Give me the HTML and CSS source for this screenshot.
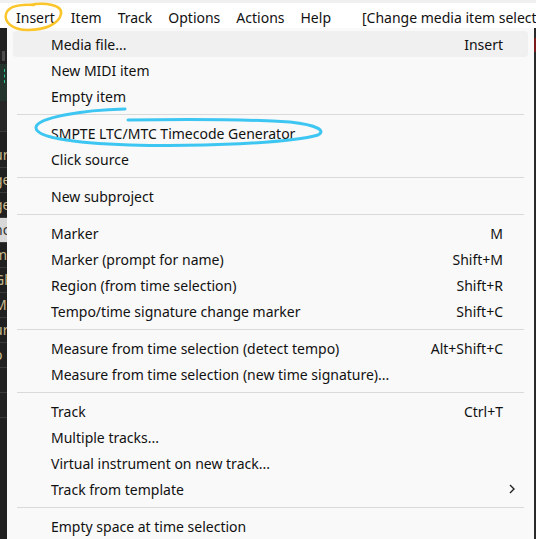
FILE: index.html
```html
<!DOCTYPE html>
<html>
<head>
<meta charset="utf-8">
<link rel="stylesheet" href="styles.css">
</head>
<body>
<div class="screen">
  <div class="topstrip"></div>
  <div class="menubar">
    <span class="mb">Insert</span>
    <span class="mb">Item</span>
    <span class="mb">Track</span>
    <span class="mb">Options</span>
    <span class="mb">Actions</span>
    <span class="mb">Help</span>
    <span class="mb title">[Change media item selection]</span>
  </div>
  <div class="below">
    <div class="leftstrip">
      <div class="ls ls-grey"></div>
      <div class="ls ls-green"><span class="dash"></span></div>
      <div class="ls ls-dark"></div>
      <div class="ls ls-line"></div>
      <div class="ls ls-txt">ur</div>
      <div class="ls ls-txt">ge</div>
      <div class="ls ls-txt">ge</div>
      <div class="ls ls-txt ls-sel">nc</div>
      <div class="ls ls-txt">m</div>
      <div class="ls ls-txt">Gl</div>
      <div class="ls ls-txt">M</div>
      <div class="ls ls-txt">ur</div>
      <div class="ls ls-txt">o</div>
      <div class="ls ls-txt"></div>
      <div class="ls ls-txt"></div>
    </div>
    <div class="menu">
      <div class="row hover"><span class="label">Media file...</span><span class="key">Insert</span></div>
      <div class="row"><span class="label">New MIDI item</span></div>
      <div class="row"><span class="label">Empty item</span></div>
      <div class="sep"></div>
      <div class="row"><span class="label">SMPTE LTC/MTC Timecode Generator</span></div>
      <div class="row"><span class="label">Click source</span></div>
      <div class="sep"></div>
      <div class="row"><span class="label">New subproject</span></div>
      <div class="sep"></div>
      <div class="row"><span class="label">Marker</span><span class="key">M</span></div>
      <div class="row"><span class="label">Marker (prompt for name)</span><span class="key">Shift+M</span></div>
      <div class="row"><span class="label">Region (from time selection)</span><span class="key">Shift+R</span></div>
      <div class="row"><span class="label">Tempo/time signature change marker</span><span class="key">Shift+C</span></div>
      <div class="sep"></div>
      <div class="row"><span class="label">Measure from time selection (detect tempo)</span><span class="key">Alt+Shift+C</span></div>
      <div class="row"><span class="label">Measure from time selection (new time signature)...</span></div>
      <div class="sep"></div>
      <div class="row"><span class="label">Track</span><span class="key">Ctrl+T</span></div>
      <div class="row"><span class="label">Multiple tracks...</span></div>
      <div class="row"><span class="label">Virtual instrument on new track...</span></div>
      <div class="row"><span class="label">Track from template</span><svg class="arrow" width="8" height="12" viewBox="0 0 8 12"><path d="M2 2 L6 6 L2 10" fill="none" stroke="#222" stroke-width="1.4"/></svg></div>
      <div class="sep"></div>
      <div class="row"><span class="label">Empty space at time selection</span></div>
    </div>
    <div class="rightstrip"><div class="rs-red"></div></div>
  </div>
  <svg class="annot" width="536" height="539" viewBox="0 0 536 539">
    <path d="M30 5 C45 2, 63 5, 61 14 C59 24, 45 30, 28 30 C12 30, 4 22, 6 14 C8 7, 18 4, 34 5" fill="none" stroke="#fcc62a" stroke-width="2.5" stroke-linecap="round"/>
    <path d="M125 109 C80 110, 38 118, 36 127 C35 137, 70 143, 130 145 C200 147, 290 143, 318 135 C326 131, 318 125, 290 122 C240 119, 180 119, 128 120" fill="none" stroke="#3ec6f2" stroke-width="3" stroke-linecap="round"/>
  </svg>
</div>
</body>
</html>
```

FILE: styles.css
```css
* { box-sizing: border-box; }
html, body { margin: 0; padding: 0; }
body {
  width: 536px;
  height: 539px;
  overflow: hidden;
  background: #1f1f1f;
  font-family: "Noto Sans", "Open Sans", sans-serif;
}
.screen {
  position: relative;
  width: 536px;
  height: 539px;
  display: flex;
  flex-direction: column;
}
.topstrip {
  height: 3px;
  background: #f0f0f0;
}
.menubar {
  height: 25px;
  background: #ffffff;
  display: flex;
  align-items: center;
  padding-left: 16px;
  padding-top: 3px;
  gap: 16px;
  font-size: 14px;
  color: #111;
  white-space: nowrap;
  overflow: hidden;
}
.mb.title { margin-left: 15px; }
.below {
  flex: 1;
  display: flex;
  min-height: 0;
}
.leftstrip {
  width: 7px;
  background: #202020;
  display: flex;
  flex-direction: column;
  overflow: hidden;
  padding-top: 23px;
}
.ls { flex: none; }
.ls-grey { height: 10px; background: #4a4a4a; width: 3px; margin-left: 2px; }
.ls-green { height: 37px; background: #23342d; position: relative; margin-top: 3px; }
.dash { position: absolute; left: 4px; top: 5px; width: 1px; height: 14px; border-left: 1px dashed #27c08a; }
.ls-dark { height: 30px; background: #262626; }
.ls-line { height: 12px; border-top: 1px solid #3a3a3a; }
.ls-txt {
  height: 25px;
  border-bottom: 1px solid #3a3a3a;
  color: #c8b88a;
  font-size: 14px;
  line-height: 24px;
  margin-left: -6px;
}
.ls-sel { background: #d8d8d8; color: #333; }
.menu {
  flex: 1;
  background: #f9f9f9;
  padding-top: 3px;
  font-size: 14px;
  color: #111;
}
.row {
  height: 26px;
  margin: 0 6px;
  padding: 0 25px 0 38px;
  display: flex;
  align-items: center;
  justify-content: space-between;
  border-radius: 4px;
  white-space: nowrap;
}
.row.hover { background: #f0f0f0; }
.key { text-align: right; }
.arrow { margin-right: -13px; }
.sep {
  height: 11px;
  margin: 0 10px;
  display: flex;
  align-items: center;
}
.sep::before {
  content: "";
  flex: 1;
  height: 1px;
  background: #dadada;
}
.rightstrip {
  width: 2px;
  background: #2a2a2a;
  position: relative;
}
.rs-red { margin-top: 10px; height: 14px; background: #7a1a1a; }
.annot {
  position: absolute;
  left: 0;
  top: 0;
  pointer-events: none;
}
```
